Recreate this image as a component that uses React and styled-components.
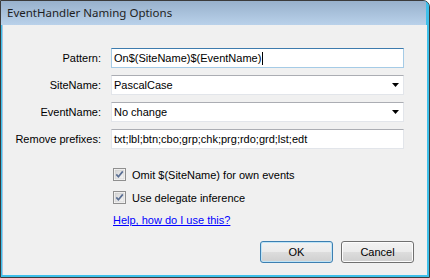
import React from "react";
import styled, { createGlobalStyle } from "styled-components";

const GlobalStyle = createGlobalStyle`
  html, body {
    margin: 0;
    padding: 0;
    background: #ffffff;
  }
  * { box-sizing: border-box; }
`;

const rows = [
  { label: "Pattern:", value: "On$(SiteName)$(EventName)", kind: "text", focused: true },
  { label: "SiteName:", value: "PascalCase", kind: "select" },
  { label: "EventName:", value: "No change", kind: "select" },
  { label: "Remove prefixes:", value: "txt;lbl;btn;cbo;grp;chk;prg;rdo;grd;lst;edt", kind: "text" },
];

const options = [
  { id: "omit", text: "Omit $(SiteName) for own events" },
  { id: "delegate", text: "Use delegate inference" },
];

export default function App() {
  return (
    <>
      <GlobalStyle />
      <Frame>
        <TitleBar>EventHandler Naming Options</TitleBar>
        <Client>
          <Form>
            {rows.map((row) => (
              <React.Fragment key={row.label}>
                <Label>{row.label}</Label>
                <Field $focused={row.focused}>
                  <FieldText>
                    {row.value}
                    {row.focused && <Caret />}
                  </FieldText>
                  {row.kind === "select" && <DropArrow />}
                </Field>
              </React.Fragment>
            ))}
          </Form>
          <Options>
            {options.map((opt) => (
              <CheckRow key={opt.id}>
                <CheckBox />
                <span>{opt.text}</span>
              </CheckRow>
            ))}
            <HelpLink href="#">Help, how do I use this?</HelpLink>
          </Options>
          <ButtonBar>
            <Button $default>OK</Button>
            <Button>Cancel</Button>
          </ButtonBar>
        </Client>
      </Frame>
    </>
  );
}

function CheckBox() {
  return (
    <svg width="13" height="13" viewBox="0 0 13 13">
      <defs>
        <linearGradient id="cbg" x1="0" y1="0" x2="1" y2="1">
          <stop offset="0" stopColor="#d4d4d4" />
          <stop offset="1" stopColor="#f6f6f6" />
        </linearGradient>
      </defs>
      <rect x="0.5" y="0.5" width="12" height="12" fill="#fdfdfd" stroke="#8f8f8f" />
      <rect x="2" y="2" width="9" height="9" fill="url(#cbg)" stroke="#c9c9c9" strokeWidth="0.6" />
      <path d="M3.3 6.4 L5.4 8.8 L9.8 3.4" fill="none" stroke="#5a6f94" strokeWidth="1.7" />
    </svg>
  );
}

function DropArrow() {
  return (
    <svg width="7" height="4" viewBox="0 0 7 4">
      <path d="M0 0 H7 L3.5 4 Z" fill="#000" />
    </svg>
  );
}

const Frame = styled.div`
  width: 430px;
  height: 278px;
  display: flex;
  flex-direction: column;
  border: 1px solid #3b3b3b;
  border-top-right-radius: 7px;
  overflow: hidden;
  background: #3ec0ea;
  padding: 0 2px 2px 1px;
`;

const TitleBar = styled.div`
  height: 24px;
  flex: none;
  display: flex;
  align-items: center;
  padding-left: 6px;
  margin: 0 -2px 0 -1px;
  padding-bottom: 1px;
  background: linear-gradient(#98b1cc, #b9d1ea);
  border-right: 3px solid #3ec0ea;
  font-family: "Noto Sans", "Open Sans", sans-serif;
  font-size: 11.5px;
  color: #1e1e1e;
`;

const Client = styled.div`
  flex: 1;
  background: #f0f0f0;
  border-left: 1px solid #a9c4e2;
  display: flex;
  flex-direction: column;
  padding: 23px 0 0 0;
  font-family: "Liberation Sans", Arial, sans-serif;
  font-size: 11px;
  color: #000;
`;

const Form = styled.div`
  display: grid;
  grid-template-columns: 98px 293px;
  column-gap: 10px;
  row-gap: 7px;
  align-items: center;
`;

const Label = styled.div`
  text-align: right;
`;

const Field = styled.div`
  height: 20px;
  background: #fff;
  border: 1px solid ${(p) => (p.$focused ? "#a5cbe6" : "#e2e5ea")};
  border-top-color: ${(p) => (p.$focused ? "#3d7bad" : "#abadb3")};
  display: flex;
  align-items: center;
  justify-content: space-between;
  padding: 0 4px 0 2px;
`;

const FieldText = styled.span`
  display: flex;
  align-items: center;
  white-space: nowrap;
`;

const Caret = styled.span`
  display: inline-block;
  width: 1px;
  height: 13px;
  background: #000;
  margin-left: 1px;
`;

const Options = styled.div`
  display: flex;
  flex-direction: column;
  gap: 10px;
  padding: 19px 0 0 110px;
`;

const CheckRow = styled.div`
  display: flex;
  align-items: center;
  gap: 6px;
  height: 13px;
`;

const HelpLink = styled.a`
  color: #0000ff;
  text-decoration: underline;
  margin-top: 0;
`;

const ButtonBar = styled.div`
  display: flex;
  justify-content: flex-end;
  gap: 8px;
  padding: 15px 13px 0 0;
`;

const Button = styled.button`
  width: 73px;
  height: 22px;
  font-family: "Liberation Sans", Arial, sans-serif;
  font-size: 11px;
  color: #000;
  border-radius: 3px;
  border: 1px solid ${(p) => (p.$default ? "#3c7fb1" : "#707070")};
  background: linear-gradient(#f2f2f2 0%, #ebebeb 50%, #dddddd 51%, #cfcfcf 100%);
  box-shadow: inset 0 0 0 1px ${(p) => (p.$default ? "#bfe4f7" : "#fcfcfc")};
  padding: 0;
`;
